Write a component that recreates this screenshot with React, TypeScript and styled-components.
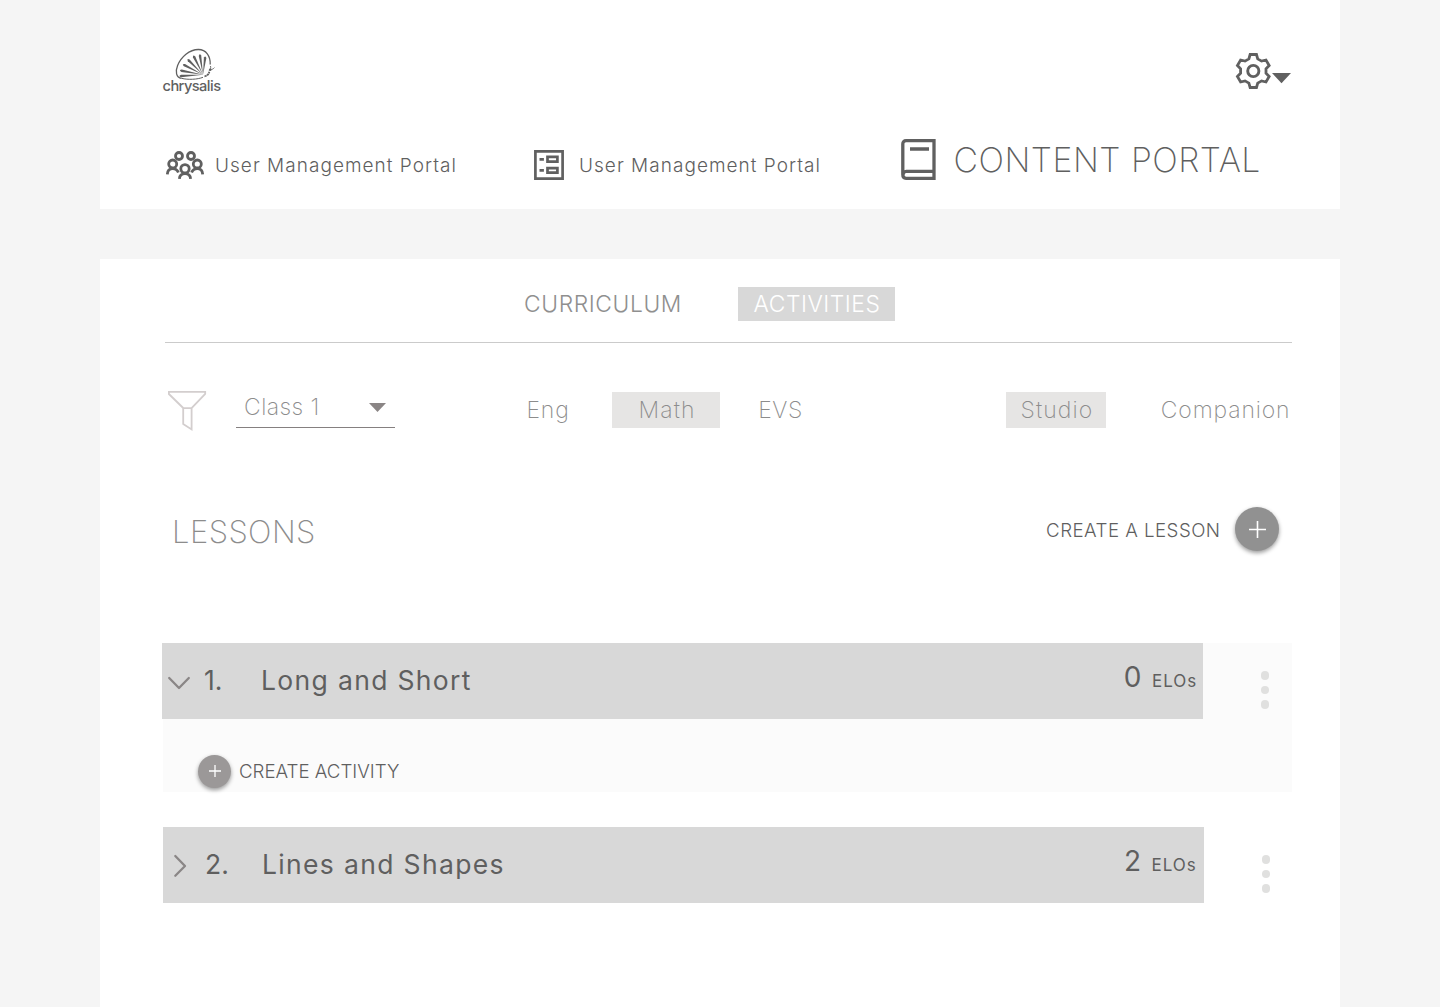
import React from "react";
import styled, { createGlobalStyle } from "styled-components";

const GlobalStyle = createGlobalStyle`
  * { box-sizing: border-box; }
  body {
    margin: 0;
    background: #f5f5f5;
    color: #5f5f5f;
    font-family: Inter, "Liberation Sans", sans-serif;
  }
`;

const Page = styled.div`
  width: 1240px;
  height: 1007px;
  margin: 0 auto;
  display: flex;
  flex-direction: column;
  gap: 50px;
  overflow: hidden;
`;

const Header = styled.header`
  height: 209px;
  flex: none;
  padding: 48px 49px 0 62px;
  background: #fff;
`;

const TopBar = styled.div`
  display: flex;
  justify-content: space-between;
  height: 82px;
`;

const SettingsButton = styled.button`
  display: flex;
  align-items: flex-start;
  height: 46px;
  padding: 0;
  border: 0;
  background: none;
`;

const GearBox = styled.span`
  padding-top: 5px;
`;

const CaretBox = styled.span`
  padding-top: 25px;
`;

const Icon = styled.svg`
  display: block;
  flex: none;
  overflow: visible;
`;

const Portals = styled.nav`
  display: flex;
  align-items: center;
  height: 60px;
`;

const PortalLink = styled.a<{ $width: number; $active?: boolean }>`
  display: flex;
  align-items: center;
  width: ${(p) => p.$width}px;
  height: 60px;
  font-size: ${(p) => (p.$active ? 33.8 : 19)}px;
  font-weight: ${(p) => (p.$active ? 200 : 350)};
  letter-spacing: ${(p) => (p.$active ? 0.5 : 1.03)}px;
  white-space: nowrap;
`;

const PortalIcon = styled.span<{ $ml: number; $mr: number; $mt: number }>`
  margin: ${(p) => p.$mt}px ${(p) => p.$mr}px 0 ${(p) => p.$ml}px;
`;

const PortalLabel = styled.span<{ $lift?: boolean }>`
  padding-top: ${(p) => (p.$lift ? 0 : 10)}px;
  padding-bottom: ${(p) => (p.$lift ? 2 : 0)}px;
`;

const Main = styled.main`
  flex: 1;
  padding: 28px 48px 0 62px;
  background: #fff;
`;

const Tabs = styled.div`
  display: flex;
  justify-content: center;
  gap: 43px;
  height: 56px;
  margin-left: 3px;
  padding-right: 53px;
  border-bottom: 1px solid #cbcbcb;
`;

const Tab = styled.button<{ $active?: boolean }>`
  width: ${(p) => (p.$active ? 157 : 185)}px;
  height: 34px;
  padding: 0;
  padding-left: ${(p) => (p.$active ? 2 : 2)}px;
  border: 0;
  background: ${(p) => (p.$active ? "#d8d8d8" : "transparent")};
  color: ${(p) => (p.$active ? "#fff" : "#8f8f8f")};
  font: 360 22.8px/34px Inter, sans-serif;
  letter-spacing: ${(p) => (p.$active ? 0.53 : 0.6)}px;
`;

const Filters = styled.div`
  display: flex;
  align-items: flex-start;
  height: 97px;
  margin-top: 42px;
  padding-left: 5px;
  color: #8c8c8c;
`;

const FunnelBox = styled.span`
  padding-top: 5px;
`;

const ClassSelect = styled.div`
  display: flex;
  align-items: center;
  justify-content: space-between;
  width: 159px;
  height: 43px;
  margin: 0 103px 0 29px;
  padding: 1px 9px 0 8px;
  border-bottom: 1px solid #858080;
  font-size: 23px;
  font-weight: 250;
  letter-spacing: 0.45px;
`;

const SelectCaret = styled.span`
  padding-top: 1px;
`;

const Option = styled.button<{ $width: number; $ml?: number; $ls: number; $pad: number; $active?: boolean }>`
  width: ${(p) => p.$width}px;
  height: 36px;
  margin: 7px 0 0 ${(p) => p.$ml ?? 0}px;
  padding: 0 0 0 ${(p) => p.$pad}px;
  border: 0;
  background: ${(p) => (p.$active ? "#e6e5e4" : "transparent")};
  color: #8c8c8c;
  font: 230 23px/36px Inter, sans-serif;
  letter-spacing: ${(p) => p.$ls}px;
  text-align: left;
  white-space: nowrap;
`;

const LessonsBar = styled.div`
  display: flex;
  align-items: center;
  justify-content: space-between;
  height: 60px;
  margin-top: 17px;
  padding: 0 13px 0 10px;
`;

const Heading = styled.h1`
  margin: 4px 0 0;
  color: #8c8c8c;
  font-size: 31px;
  font-weight: 200;
  letter-spacing: 0.45px;
`;

const CreateLink = styled.div<{ $ls: number; $gap: number }>`
  display: flex;
  align-items: center;
  gap: ${(p) => p.$gap}px;
  font-size: 18.7px;
  font-weight: 260;
  letter-spacing: ${(p) => p.$ls}px;
  white-space: nowrap;
`;

const CreateLabel = styled.span<{ $drop?: number }>`
  padding-top: ${(p) => p.$drop ?? 0}px;
`;

const RoundButton = styled.button<{ $size: number; $tone: string }>`
  display: grid;
  place-items: center;
  width: ${(p) => p.$size}px;
  height: ${(p) => p.$size}px;
  padding: 0;
  border: 0;
  border-radius: 50%;
  background: ${(p) => p.$tone};
  box-shadow: 0 2px 4px rgba(0, 0, 0, 0.4);
`;

const LessonList = styled.section`
  display: flex;
  flex-direction: column;
  gap: 35px;
  margin-top: 84px;
`;

const Lesson = styled.article<{ $open?: boolean }>`
  height: ${(p) => (p.$open ? 149 : 76)}px;
  margin-left: 1px;
  background: ${(p) => (p.$open ? "#fbfbfb" : "transparent")};
`;

const LessonRow = styled.div<{ $shift: number }>`
  display: flex;
  align-items: center;
  height: 76px;
  margin-left: ${(p) => p.$shift}px;
`;

const LessonBar = styled.div<{ $end: number }>`
  display: flex;
  align-items: center;
  width: 1041px;
  height: 76px;
  padding: 0 ${(p) => p.$end}px 0 6px;
  background: #d8d8d8;
  font-size: 26.5px;
  font-weight: 370;
  white-space: nowrap;
`;

const LessonNumber = styled.span`
  width: 57px;
  margin-left: 14px;
  padding-bottom: 2px;
`;

const LessonTitle = styled.span`
  flex: 1;
  padding-bottom: 2px;
  letter-spacing: 1.34px;
`;

const EloCount = styled.span`
  display: flex;
  align-items: baseline;
  margin-bottom: 8px;
  font-size: 28px;
`;

const EloLabel = styled.span`
  width: 46px;
  margin-left: 10.5px;
  font-size: 17px;
  letter-spacing: 1px;
`;

const MoreButton = styled.button`
  display: flex;
  flex-direction: column;
  align-items: center;
  gap: 6px;
  width: 9px;
  margin: 18px 0 0 57.5px;
  padding: 0;
  border: 0;
  background: none;
`;

const Dot = styled.i`
  width: 8.5px;
  height: 8.5px;
  border-radius: 50%;
  background: #e0e0df;
`;

const Activities = styled.div`
  display: flex;
  padding: 35.5px 0 0 35px;
`;

const gearPoints = Array.from({ length: 6 }, (_, i) => {
  const a = (i * Math.PI) / 3 - Math.PI / 2;
  return [
    [12.9, -0.35],
    [16.8, -0.19],
    [16.8, 0.19],
    [12.9, 0.35],
  ].map(([r, d]) => `${(18.3 + r * Math.cos(a + d)).toFixed(2)},${(18 + r * Math.sin(a + d)).toFixed(2)}`);
})
  .flat()
  .join(" ");

const rays = [
  [14.6, 27.2], [15.2, 21.2], [18.4, 14.6], [23.4, 9], [29.6, 5], [36.5, 3.6], [42.5, 6],
];

const ChrysalisLogo = () => (
  <Icon width="60" height="48" viewBox="-1 -1 60 48" fill="none" stroke="#606060">
    <path d="M18.5 29.3C13 28.5 12.2 22.5 14.6 16.5C18 8 26.5.4 35.5.5C43 .6 47.6 7 47.2 15.5" strokeWidth="1.3" />
    <path d="M18.5 29.3C25 31 34.5 30.5 40 28.3" strokeWidth="1" />
    {rays.map(([x, y]) => {
      const dx = 40 - x;
      const dy = 25.8 - y;
      const l = Math.hypot(dx, dy);
      const nx = (-dy / l) * 1.25;
      const ny = (dx / l) * 1.25;
      const sx = x + dx * 0.14;
      const sy = y + dy * 0.14;
      return <path key={x} d={`M40 25.8L${sx + nx} ${sy + ny}Q${x} ${y} ${sx - nx} ${sy - ny}Z`} fill="#606060" stroke="none" />;
    })}
    <path d="M41.5 27.3C44 27 45.8 25.2 46.3 22.8" strokeWidth="1.8" strokeDasharray="2.2 .5" />
    <path d="M46.2 21.5C47.5 20.4 48 18.7 47.5 17M47.2 20.4C49 20.7 50.3 20 51.4 18.6" strokeWidth=".9" />
    <circle cx="47.2" cy="20.8" r="1.3" fill="#606060" stroke="none" />
    <text x="-.5" y="42.4" fill="#606060" stroke="none" fontFamily="Inter, sans-serif" fontWeight="450" fontSize="14.6" textLength="58.5" lengthAdjust="spacing">chrysalis</text>
  </Icon>
);

const GearIcon = () => (
  <Icon width="37" height="36" viewBox="0 0 37 36" fill="none" stroke="#606060">
    <polygon points={gearPoints} strokeWidth="2.8" />
    <circle cx="18.3" cy="18" r="5.6" strokeWidth="2.9" />
  </Icon>
);

const GroupIcon = () => (
  <Icon width="38" height="28" viewBox="0 0 38 28" fill="none" stroke="#606060" strokeWidth="2.8">
    <circle cx="13" cy="5" r="3.5" />
    <circle cx="25" cy="5" r="3.5" />
    <circle cx="6.7" cy="13" r="4" />
    <circle cx="31.3" cy="13" r="4" />
    <circle cx="19" cy="17.8" r="4.2" />
    <path d="M1.3 23.3C1.5 20 3.5 17.6 6.7 17.6C9.4 17.6 11.4 19 12.4 21.6M36.7 23.3C36.5 20 34.5 17.6 31.3 17.6C28.6 17.6 26.6 19 25.6 21.6M13.4 27.8C13.6 24.7 15.8 22.6 19 22.6C22.2 22.6 24.4 24.7 24.6 27.8" />
  </Icon>
);

const BallotIcon = () => (
  <Icon width="30" height="30" viewBox="0 0 30 30" fill="none" stroke="#606060" strokeWidth="2.7">
    <path d="M1.4 1.4H28.6V28.6H1.4ZM13.5 6.9H23.4V11.7H13.5ZM13.5 18.1H23.4V22.7H13.5ZM5.5 9.3H9.9M5.5 20.4H9.9" />
  </Icon>
);

const BookIcon = () => (
  <Icon width="35" height="41" viewBox="0 0 35 41" fill="none" stroke="#606060" strokeWidth="3.3">
    <path d="M33 1.7H5C3 1.7 1.8 3 1.8 5V35.5C1.8 38 3 39.3 5 39.3H33ZM2 36C2 34 3.2 32.3 5.3 32.3H33M9 10H28" />
  </Icon>
);

const FunnelIcon = () => (
  <Icon width="40" height="41" viewBox="0 0 40 41" fill="none" stroke="#d3cece" strokeWidth="1.8">
    <path d="M1.9 1.8H38.2V4L24.6 18V39.4L16.2 34V18L1.9 4ZM16.2 18.2H24.6" />
  </Icon>
);

const Caret = ({ width, height, color }: { width: number; height: number; color: string }) => (
  <Icon width={width} height={height} viewBox="0 0 18 10" preserveAspectRatio="none">
    <path d="M0 0H18L9 10Z" fill={color} />
  </Icon>
);

const Chevron = ({ open }: { open?: boolean }) => (
  <Icon width="22" height="22" viewBox="0 0 22 22" fill="none" stroke="#8a8686" strokeWidth="2.3" strokeLinecap="round" strokeLinejoin="round">
    <path d={open ? "M1.2 8L11 18L20.8 8" : "M6.3 2L16 12L6.3 21.8"} />
  </Icon>
);

const Plus = ({ size, weight }: { size: number; weight: number }) => (
  <Icon width={size} height={size} viewBox={`0 0 ${size} ${size}`} stroke="#fff" strokeWidth={weight}>
    <path d={`M0 ${size / 2}H${size}M${size / 2} 0V${size}`} />
  </Icon>
);

const LessonHeader = ({ number, title, elos, open }: { number: number; title: string; elos: number; open?: boolean }) => (
  <LessonRow $shift={open ? -1 : 0}>
    <LessonBar $end={open ? 5 : 6.5}>
      <Chevron open={open} />
      <LessonNumber>{number}.</LessonNumber>
      <LessonTitle>{title}</LessonTitle>
      <EloCount>
        {elos}
        <EloLabel>ELOs</EloLabel>
      </EloCount>
    </LessonBar>
    <MoreButton aria-label="More">
      <Dot />
      <Dot />
      <Dot />
    </MoreButton>
  </LessonRow>
);

export default function App() {
  return (
    <>
      <GlobalStyle />
      <Page>
        <Header>
          <TopBar>
            <ChrysalisLogo />
            <SettingsButton aria-label="Settings">
              <GearBox><GearIcon /></GearBox>
              <CaretBox><Caret width={19} height={10.3} color="#606060" /></CaretBox>
            </SettingsButton>
          </TopBar>
          <Portals>
            <PortalLink $width={372}>
              <PortalIcon $ml={4} $mr={11} $mt={10}><GroupIcon /></PortalIcon>
              <PortalLabel>User Management Portal</PortalLabel>
            </PortalLink>
            <PortalLink $width={367}>
              <PortalIcon $ml={0} $mr={15} $mt={10}><BallotIcon /></PortalIcon>
              <PortalLabel>User Management Portal</PortalLabel>
            </PortalLink>
            <PortalLink $width={370} $active>
              <PortalIcon $ml={0} $mr={17.5} $mt={-1}><BookIcon /></PortalIcon>
              <PortalLabel $lift>CONTENT PORTAL</PortalLabel>
            </PortalLink>
          </Portals>
        </Header>
        <Main>
          <Tabs>
            <Tab>CURRICULUM</Tab>
            <Tab $active>ACTIVITIES</Tab>
          </Tabs>
          <Filters>
            <FunnelBox><FunnelIcon /></FunnelBox>
            <ClassSelect>
              Class 1
              <SelectCaret><Caret width={17} height={9} color="#8a8585" /></SelectCaret>
            </ClassSelect>
            <Option $width={72} $pad={28.5} $ls={0.8}>Eng</Option>
            <Option $width={108} $ml={42} $pad={26.5} $ls={1.1} $active>Math</Option>
            <Option $width={70} $ml={12} $pad={26.3} $ls={0.5}>EVS</Option>
            <Option $width={100} $ml={204} $pad={14.5} $ls={1.1} $active>Studio</Option>
            <Option $width={140} $ml={40} $pad={14.8} $ls={0.85}>Companion</Option>
          </Filters>
          <LessonsBar>
            <Heading>LESSONS</Heading>
            <CreateLink $ls={0.47} $gap={14.5}>
              <CreateLabel $drop={2}>CREATE A LESSON</CreateLabel>
              <RoundButton $size={44} $tone="#919191" aria-label="Create a lesson">
                <Plus size={17} weight={1.6} />
              </RoundButton>
            </CreateLink>
          </LessonsBar>
          <LessonList>
            <Lesson $open>
              <LessonHeader number={1} title="Long and Short" elos={0} open />
              <Activities>
                <CreateLink $ls={0} $gap={8}>
                  <RoundButton $size={33} $tone="#9b9898" aria-label="Create activity">
                    <Plus size={12} weight={1.3} />
                  </RoundButton>
                  <CreateLabel>CREATE ACTIVITY</CreateLabel>
                </CreateLink>
              </Activities>
            </Lesson>
            <Lesson>
              <LessonHeader number={2} title="Lines and Shapes" elos={2} />
            </Lesson>
          </LessonList>
        </Main>
      </Page>
    </>
  );
}
